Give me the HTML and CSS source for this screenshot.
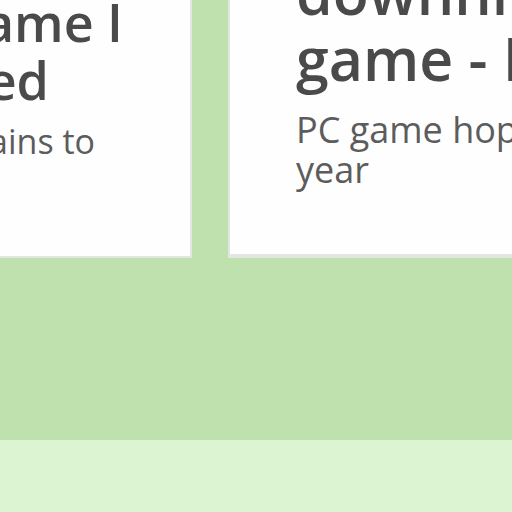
FILE: index.html
```
<!DOCTYPE html>
<html lang="en">
<head>
<meta charset="utf-8">
<title>Games</title>
<link rel="stylesheet" href="styles.css">
</head>
<body>
<main class="cards">
<article class="card card-start">
<h2 class="title"><span class="line line-one">ame I</span><span class="line line-two">ed</span></h2>
<p class="summary"><span class="line line-three">ains to</span></p>
</article>
<article class="card card-end">
<h2 class="title">downhill<br>game - I</h2>
<p class="summary">PC game hop<br>year</p>
</article>
</main>
<footer class="footer"></footer>
</body>
</html>
```
FILE: styles.css
```
* { box-sizing: border-box; }
body {
  margin: 0;
  min-height: 100vh;
  display: flex;
  flex-direction: column;
  overflow: hidden;
  background: #bfe1ae;
  color: #4a4a4a;
  font-family: "Open Sans", sans-serif;
}
.cards {
  display: grid;
  grid-template-columns: minmax(0, 192fr) minmax(0, 284fr);
  gap: 36px;
  margin-top: -41px;
  padding-bottom: 182px;
}
.card {
  background: #fefefe;
  border: 2px solid #e4e6e3;
  border-top: 0;
  white-space: nowrap;
}
.title, .summary { margin: 0; }
.title { font-weight: 600; }
.summary { color: #5c5c5c; line-height: 40px; }
.card-start { border-left: 0; padding-top: 34px; }
.card-start .title { font-size: 52px; line-height: 58px; }
.card-start .summary { margin-top: 12px; font-size: 34px; }
.line { display: flex; justify-content: flex-end; }
.line-one { padding-right: 67px; }
.line-two { padding-right: 141px; }
.line-three { padding-right: 95px; }
.card-end {
  border-right: 0;
  border-bottom-width: 4px;
  padding: 0 0 64px 66px;
}
.card-end .title { font-size: 59px; line-height: 66px; }
.card-end .summary { margin-top: 19px; font-size: 36px; }
.footer {
  flex: 1;
  background: #dcf4d2;
}
```
